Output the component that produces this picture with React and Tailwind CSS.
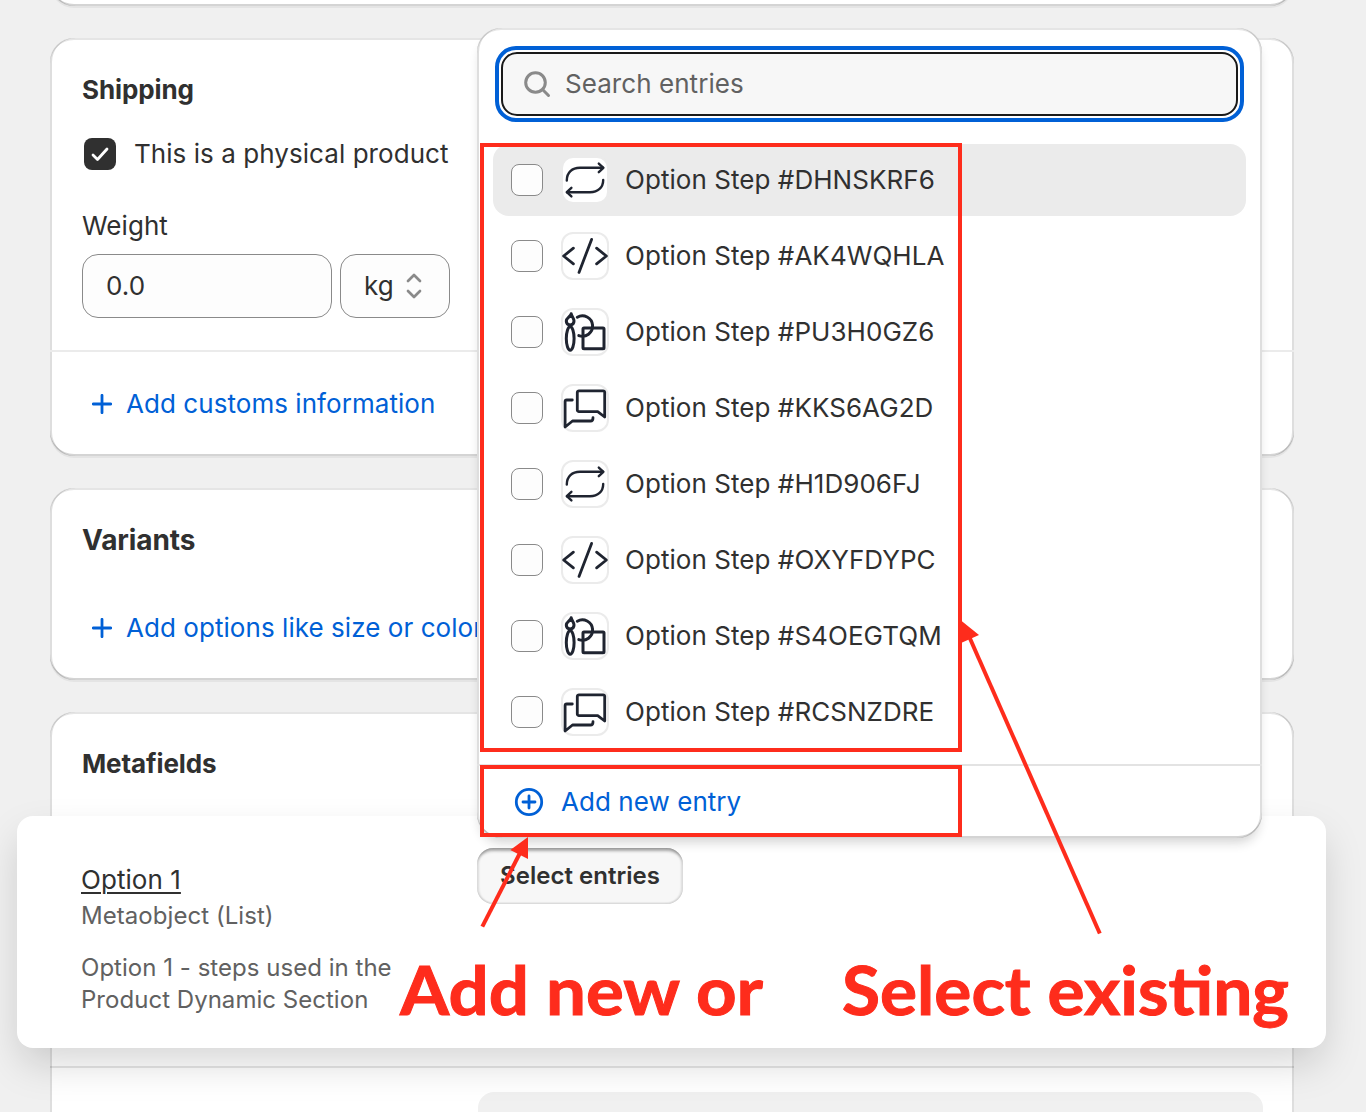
import React from "react";

const BEVEL =
  "shadow-[0_2px_0_rgba(26,26,26,0.05),inset_2px_0_0_rgba(0,0,0,0.13),inset_-2px_0_0_rgba(0,0,0,0.13),inset_0_-2px_0_rgba(0,0,0,0.17),inset_0_2px_0_rgba(204,204,204,0.5)]";

function Card({ className = "", children }) {
  return <section className={`rounded-[24px] bg-white ${BEVEL} ${className}`}>{children}</section>;
}

function Heading({ className = "text-[26px]", children }) {
  return <h2 className={`leading-10 font-[650] tracking-[-0.1px] ${className}`}>{children}</h2>;
}

function AddLink({ children }) {
  return (
    <a className="flex items-center gap-[14px] pl-[10px] text-[#0060d6] whitespace-nowrap">
      <svg className="size-5 shrink-0" viewBox="0 0 20 20" fill="none" stroke="currentColor" strokeWidth="2.8" strokeLinecap="round">
        <path d="M10 1.3v17.400M1.300 10h17.400" />
      </svg>
      {children}
    </a>
  );
}

const ICONS = {
  repeat: (
    <g strokeWidth="2.4">
      <path d="M5.8 24.5C5.8 16.5 11 11.8 19 11.8H42" />
      <path d="M37.8 7.6l4.6 4.2-4.6 4.4" />
      <path d="M42.2 24C42.2 31.5 37 36.2 29 36.2H6" />
      <path d="M10.4 31.8l-4.6 4.4 4.6 4.2" />
    </g>
  ),
  code: (
    <g strokeWidth="2.8">
      <path d="M12.4 16.2L2.6 24l9.800 7.8" />
      <path d="M30.6 7.4L18 40.4" />
      <path d="M35.6 16.2l9.800 7.8-9.800 7.8" />
    </g>
  ),
  design: (
    <g strokeWidth="3">
      <path d="M10.200 5.800C9.400 8.800 5.300 9.800 5.300 13c0 2.400 1.500 3.900 3.800 3.900s3.900-1.500 3.900-3.900c0-2.900-2.100-4-2.800-7.200z" />
      <ellipse cx="9.200" cy="30.500" rx="3.900" ry="11.800" />
      <path d="M16.300 9.200A10.200 10.200 0 1 1 17.800 27.600" />
      <rect x="22" y="20" width="21" height="20.700" rx="1" />
    </g>
  ),
  chat: (
    <g strokeWidth="2.8">
      <path d="M18 6.800h24.200a1.500 1.500 0 0 1 1.500 1.500V33l-7-5.400H18a1.700 1.700 0 0 1-1.700-1.700V8.500A1.700 1.700 0 0 1 18 6.800z" />
      <path d="M11.300 16H5.700A1.600 1.600 0 0 0 4.100 17.600V43l7.400-6H29.600c1.700 0 2.400-1.200 2.400-3.300" />
    </g>
  ),
};

const ENTRIES = [
  ["DHNSKRF6", "repeat"],
  ["AK4WQHLA", "code"],
  ["PU3H0GZ6", "design"],
  ["KKS6AG2D", "chat"],
  ["H1D906FJ", "repeat"],
  ["OXYFDYPC", "code"],
  ["S4OEGTQM", "design"],
  ["RCSNZDRE", "chat"],
];

function Entry({ id, icon, active }) {
  return (
    <li className={`flex h-[72px] items-center rounded-[16px] pl-[18px] ${active ? "bg-[#ebebeb]" : ""}`}>
      <span className="size-8 shrink-0 rounded-[8px] border border-[#8a8a8a] bg-[#fdfdfd]" />
      <span className="relative ml-[18px] size-12 shrink-0 rounded-[12px] border-2 border-[#ebebeb] bg-white">
        <svg
          className="absolute -top-0.5 -left-0.5 size-12"
          viewBox="0 0 48 48"
          fill="none"
          stroke="#1f2430"
          strokeLinecap="round"
          strokeLinejoin="round"
        >
          {ICONS[icon]}
        </svg>
      </span>
      <span className="ml-4 whitespace-nowrap">Option Step #{id}</span>
    </li>
  );
}

function EntryPicker() {
  return (
    <div className="absolute top-[28px] left-[477px] flex h-[810px] w-[785px] flex-col rounded-[24px] bg-white shadow-[0_8px_12px_-4px_rgba(26,26,26,0.2),inset_2px_0_0_rgba(0,0,0,0.13),inset_-2px_0_0_rgba(0,0,0,0.13),inset_0_-2px_0_rgba(0,0,0,0.17),inset_0_2px_0_rgba(204,204,204,0.5)]">
      <div className="px-[18px] pt-[18px]">
        <div className="rounded-[21px] border-4 border-[#0060d6] p-[2px]">
          <div className="flex h-16 items-center rounded-[16px] border-2 border-[#1a1a1a] bg-[#f7f7f7] pl-5">
            <svg className="size-7" viewBox="0 0 28 28" fill="none" stroke="#8a8a8a" strokeWidth="3" strokeLinecap="round">
              <circle cx="12.500" cy="12.500" r="9.800" />
              <path d="M19.800 19.800l5.700 5.700" />
            </svg>
            <span className="ml-[14px] text-[#616161]">Search entries</span>
          </div>
        </div>
      </div>
      <ul className="mt-[22px] flex flex-col gap-1 pr-4 pl-4">
        {ENTRIES.map(([id, icon], i) => (
          <Entry key={id} id={id} icon={icon} active={i === 0} />
        ))}
      </ul>
      <div className="mt-auto flex h-[74px] items-center border-t-2 border-[#e3e3e3] pl-[37px] text-[#0060d6]">
        <svg className="size-[30px]" viewBox="0 0 30 30" fill="none" stroke="currentColor" strokeWidth="2.800" strokeLinecap="round">
          <circle cx="15" cy="15" r="12.700" />
          <path d="M15 9v12M9 15h12" />
        </svg>
        <span className="ml-[17px]">Add new entry</span>
      </div>
    </div>
  );
}

function Annotations() {
  return (
    <>
      <div className="absolute top-[143px] left-[480px] h-[609px] w-[482px] border-4 border-[#fe2c1c]" />
      <div className="absolute top-[765px] left-[480px] h-[72px] w-[482px] border-4 border-[#fe2c1c]" />
      <svg className="absolute top-0 left-0 h-[1112px] w-[1366px]" viewBox="0 0 1366 1112" stroke="#fe2c1c" fill="#fe2c1c">
        <path d="M482.300 926.700L520 853" strokeWidth="4" />
        <path d="M528 837L510.300 850L528 859z" stroke="none" />
        <path d="M1099.800 933.500L968 634" strokeWidth="4" />
        <path d="M961 620.500L979 635L961 643z" stroke="none" />
      </svg>
      <p className="absolute top-[950px] left-[400px] origin-left scale-x-[1.073] text-[66px] leading-[80px] font-bold tracking-normal whitespace-nowrap text-[#fe2c1c] [-webkit-text-stroke:1px_#fe2c1c] [font-family:Lato,sans-serif]">
        Add new or
      </p>
      <p className="absolute top-[950px] left-[842px] origin-left scale-x-[1.052] text-[66px] leading-[80px] font-bold tracking-normal whitespace-nowrap text-[#fe2c1c] [-webkit-text-stroke:1px_#fe2c1c] [font-family:Lato,sans-serif]">
        Select existing
      </p>
    </>
  );
}

export default function App() {
  return (
    <div className="relative h-[1112px] w-[1366px] overflow-hidden bg-[#f0f0f0] text-[26px] leading-10 tracking-[0.055px] text-[#303030] [font-family:Inter,sans-serif] [font-optical-sizing:none]">
      <main className="flex w-[1294px] flex-col gap-8 pl-[50px]">
        <Card className="-mt-[54px] h-[60px]" />

        <Card>
          <div className="p-8">
            <Heading>Shipping</Heading>
            <label className="mt-6 flex items-center pl-[2px]">
              <span className="flex size-8 items-center justify-center rounded-[8px] bg-[#303030]">
                <svg className="size-5" viewBox="0 0 20 20" fill="none" stroke="#fff" strokeWidth="2.800" strokeLinecap="round" strokeLinejoin="round">
                  <path d="M3 11l4.500 4.500L17 5" />
                </svg>
              </span>
              <span className="ml-[18px]">This is a physical product</span>
            </label>
            <p className="mt-8">Weight</p>
            <div className="mt-2 flex gap-2">
              <div className="flex h-16 w-[250px] items-center rounded-[16px] border border-[#8a8a8a] bg-[#fdfdfd] pl-[23px]">0.0</div>
              <div className="flex h-16 w-[110px] items-center rounded-[16px] border border-[#8a8a8a] bg-[#fdfdfd] pl-[23px]">
                kg
                <svg className="ml-3 h-7 w-4" viewBox="0 0 16 28" fill="none" stroke="#8a8a8a" strokeWidth="2.700" strokeLinecap="round" strokeLinejoin="round">
                  <path d="M2 9l6-6 6 6M2 19l6 6 6-6" />
                </svg>
              </div>
            </div>
          </div>
          <div className="border-t-2 border-[#ebebeb] p-8">
            <AddLink>Add customs information</AddLink>
          </div>
        </Card>

        <Card className="p-8">
          <Heading className="text-[28px]">Variants</Heading>
          <div className="mt-12">
            <AddLink>Add options like size or color</AddLink>
          </div>
        </Card>

        <Card className="h-[460px] shrink-0">
          <div className="p-8">
            <Heading>Metafields</Heading>
          </div>
          <div className="relative -mr-8 -ml-[33px] flex h-[232px] rounded-[16px] bg-white pt-8 pl-16 shadow-[0_18px_40px_-4px_rgba(0,0,0,0.17)]">
            <div className="mt-3 w-[396px] text-[24px] leading-8 text-[#616161]">
              <p className="text-[26px] leading-10 text-[#303030] underline decoration-2 underline-offset-[3px]">Option 1</p>
              <p>Metaobject (List)</p>
              <p className="mt-5 w-[340px] tracking-[0.03px]">Option 1 - steps used in the Product Dynamic Section</p>
            </div>
            <button className="h-14 w-[206px] rounded-[16px] bg-[#f7f7f7] text-[24px] font-[570] tracking-[0.02px] shadow-[inset_0_6px_3px_-3px_rgba(26,26,26,0.35),inset_2px_0_2px_rgba(26,26,26,0.12),inset_-2px_0_2px_rgba(26,26,26,0.12),inset_0_-2px_1px_rgba(26,26,26,0.05)]">
              Select entries
            </button>
          </div>
          <div className="mt-[18px] border-t-2 border-black/10 pt-6 pl-[428px]">
            <div className="h-16 w-[785px] rounded-[16px] bg-[#f0f0f0]" />
          </div>
        </Card>
      </main>

      <EntryPicker />
      <Annotations />
    </div>
  );
}
